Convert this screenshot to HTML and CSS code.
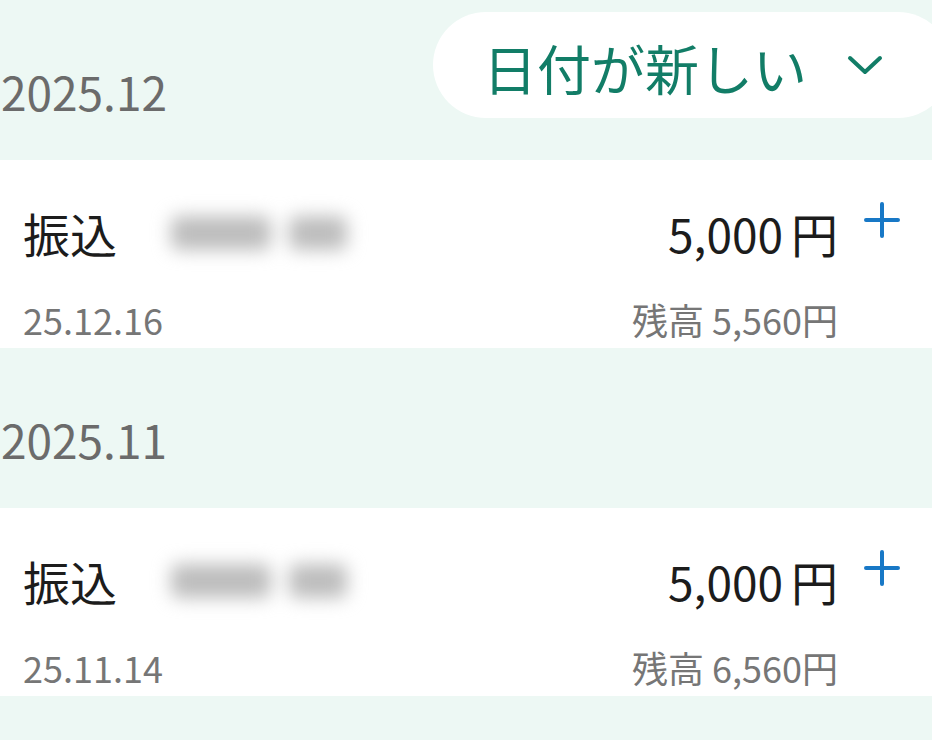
FILE: index.html
```html
<!DOCTYPE html>
<html lang="ja">
<head>
    <meta charset="UTF-8">
    <meta name="viewport" content="width=device-width, initial-scale=1.0">
    <title>入出金明細</title>
    <link rel="stylesheet" href="styles.css">
</head>
<body>

<div class="history">
    <div class="month">
        <div class="month-label">2025.12</div>
        <button class="sort-button">
            <span>日付が新しい</span>
            <svg class="chevron" width="40" height="24" viewBox="0 0 40 24">
                <polyline points="4,5 19,19 34,5" fill="none" stroke="currentColor" stroke-width="4" stroke-linecap="round" stroke-linejoin="round"/>
            </svg>
        </button>
    </div>

    <div class="entry">
        <div class="entry-main">
            <div class="entry-title">
                <span class="entry-type">振込</span>
                <span class="masked"><i class="blob blob-long"></i><i class="blob blob-short"></i></span>
            </div>
            <div class="entry-date">25.12.16</div>
        </div>
        <div class="entry-amounts">
            <div class="amount">5,000<span class="yen">円</span></div>
            <div class="balance">残高 5,560円</div>
        </div>
        <svg class="plus" width="36" height="36" viewBox="0 0 36 36">
            <path d="M18 2 V34 M2 18 H34" stroke="currentColor" stroke-width="4" stroke-linecap="round"/>
        </svg>
    </div>

    <div class="month">
        <div class="month-label">2025.11</div>
    </div>

    <div class="entry">
        <div class="entry-main">
            <div class="entry-title">
                <span class="entry-type">振込</span>
                <span class="masked"><i class="blob blob-long"></i><i class="blob blob-short"></i></span>
            </div>
            <div class="entry-date">25.11.14</div>
        </div>
        <div class="entry-amounts">
            <div class="amount">5,000<span class="yen">円</span></div>
            <div class="balance">残高 6,560円</div>
        </div>
        <svg class="plus" width="36" height="36" viewBox="0 0 36 36">
            <path d="M18 2 V34 M2 18 H34" stroke="currentColor" stroke-width="4" stroke-linecap="round"/>
        </svg>
    </div>
</div>

</body>
</html>
```

FILE: styles.css
```css
body {
    margin: 0;
    background-color: #edf8f4;
    font-family: "Noto Sans CJK JP", "Noto Sans", sans-serif;
    overflow: hidden;
}

.history {
    width: 932px;
}

.month {
    height: 160px;
    display: flex;
    justify-content: space-between;
    align-items: flex-start;
}

.month-label {
    padding-top: 68px;
    padding-left: 1px;
    font-size: 46px;
    line-height: 46px;
    color: #6b6b6b;
}

.sort-button {
    margin-top: 12px;
    margin-right: -19px;
    width: 518px;
    height: 106px;
    padding: 6px 0 0 50px;
    border: none;
    border-radius: 53px;
    background-color: #fff;
    color: #127d67;
    font-family: inherit;
    font-size: 54px;
    line-height: 54px;
    display: flex;
    align-items: center;
    box-sizing: border-box;
}

.chevron {
    margin-left: 39px;
    margin-top: -6px;
}

.entry {
    height: 188px;
    box-sizing: border-box;
    padding: 48px 32px 10px 23px;
    background-color: #fff;
    display: flex;
    align-items: flex-start;
}

.entry-main {
    flex: 1;
}

.entry-title {
    display: flex;
    align-items: center;
    height: 50px;
}

.entry-type {
    font-size: 47px;
    line-height: 50px;
    color: #1c1c1c;
}

.masked {
    display: flex;
    margin-left: 54px;
    gap: 18px;
    filter: blur(9px);
}

.blob {
    display: block;
    height: 34px;
    background-color: #bdbdbd;
    border-radius: 8px;
}

.blob-long {
    width: 100px;
}

.blob-short {
    width: 58px;
}

.entry-date,
.balance {
    margin-top: 41px;
    font-size: 36px;
    line-height: 40px;
    color: #767676;
}

.entry-amounts {
    text-align: right;
}

.amount {
    font-size: 46px;
    line-height: 50px;
    color: #1c1c1c;
}

.yen {
    margin-left: 8px;
    font-size: 47px;
}

.plus {
    margin-left: 26px;
    margin-top: -6px;
    color: #1878c6;
}
```
